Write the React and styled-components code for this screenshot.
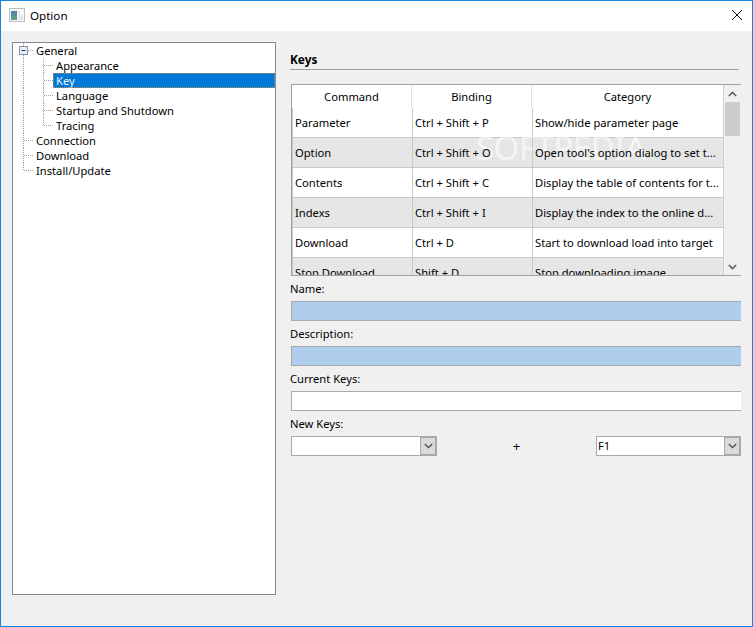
import React from "react";
import styled, { createGlobalStyle } from "styled-components";

const treeItems = [
  { label: "General", level: 0, expander: true },
  { label: "Appearance", level: 1 },
  { label: "Key", level: 1, selected: true },
  { label: "Language", level: 1 },
  { label: "Startup and Shutdown", level: 1 },
  { label: "Tracing", level: 1, last: true },
  { label: "Connection", level: 0 },
  { label: "Download", level: 0 },
  { label: "Install/Update", level: 0, last: true },
];

const bindings = [
  ["Parameter", "Ctrl + Shift + P", "Show/hide parameter page"],
  ["Option", "Ctrl + Shift + O", "Open tool's option dialog to set t..."],
  ["Contents", "Ctrl + Shift + C", "Display the table of contents for t..."],
  ["Indexs", "Ctrl + Shift + I", "Display the index to the online d..."],
  ["Download", "Ctrl + D", "Start to download load into target"],
  ["Stop Download", "Shift + D", "Stop downloading image"],
];

const TreeGuide = ({ level, last, expander }) => (
  <svg width={level ? 40 : 20} height="15" viewBox={`0 0 ${level ? 40 : 20} 15`} style={{ flexShrink: 0 }}>
    <g stroke="#a0a0a0" strokeDasharray="1 1" fill="none">
      {level === 0 && <path d={`M10.5 0V${last ? 8 : 15}`} />}
      {level === 0 && <path d="M11 7.5H20" />}
      {level === 1 && <path d="M10.5 0V15" />}
      {level === 1 && <path d={`M30.5 0V${last ? 8 : 15}`} />}
      {level === 1 && <path d="M31 7.5H40" />}
    </g>
    {expander && (
      <g>
        <rect x="6.5" y="3.5" width="8" height="8" fill="#e8edf5" stroke="#8a94a6" />
        <path d="M8.5 7.5H12.5" stroke="#1f3f7a" />
      </g>
    )}
  </svg>
);

const Chevron = ({ up }) => (
  <svg width="9" height="6" viewBox="0 0 9 6">
    <path d={up ? "M0.8 5L4.5 1.4L8.2 5" : "M0.8 1L4.5 4.6L8.2 1"} fill="none" stroke="#606060" strokeWidth="1.6" />
  </svg>
);

const ComboBox = ({ value }) => (
  <Combo>
    <ComboText>{value}</ComboText>
    <ComboButton>
      <svg width="9" height="6" viewBox="0 0 9 6">
        <path d="M0.8 1L4.5 4.6L8.2 1" fill="none" stroke="#555" strokeWidth="1.4" />
      </svg>
    </ComboButton>
  </Combo>
);

export default function App() {
  return (
    <>
      <GlobalStyle />
      <Window>
        <TitleBar>
          <TitleIcon>
            <svg width="16" height="14" viewBox="0 0 16 14">
              <defs>
                <linearGradient id="paneFill" x1="0" y1="0" x2="0" y2="1">
                  <stop offset="0" stopColor="#4f7f9f" />
                  <stop offset="1" stopColor="#5fa58c" />
                </linearGradient>
              </defs>
              <rect x="0.5" y="0.5" width="15" height="13" fill="#f6f6f6" stroke="#bdbdbd" />
              <rect x="2" y="3" width="6" height="9" fill="url(#paneFill)" />
              <rect x="9" y="3" width="5" height="9" fill="#e4e8e8" />
              <rect x="11" y="3" width="3" height="4" fill="#fafafa" />
            </svg>
          </TitleIcon>
          <TitleText>Option</TitleText>
          <CloseIcon width="10" height="10" viewBox="0 0 10 10">
            <path d="M0 0L10 10M10 0L0 10" stroke="#111" fill="none" />
          </CloseIcon>
        </TitleBar>
        <Body>
          <Tree>
            {treeItems.map((item) => (
              <TreeRow key={item.label}>
                <TreeGuide level={item.level} last={item.last} expander={item.expander} />
                <TreeLabel $selected={item.selected}>{item.label}</TreeLabel>
              </TreeRow>
            ))}
          </Tree>
          <Panel>
            <Heading>Keys</Heading>
            <TableFrame>
              <TableArea>
                <HeaderRow>
                  <HeaderCell>Command</HeaderCell>
                  <HeaderCell>Binding</HeaderCell>
                  <HeaderCell>Category</HeaderCell>
                </HeaderRow>
                {bindings.map((row, i) => (
                  <Row key={row[0]} $alt={i % 2 === 1}>
                    {row.map((text) => (
                      <Cell key={text}>{text}</Cell>
                    ))}
                  </Row>
                ))}
              </TableArea>
              <ScrollBar>
                <ScrollButton><Chevron up /></ScrollButton>
                <ScrollThumb />
                <ScrollTrack />
                <ScrollButton><Chevron /></ScrollButton>
              </ScrollBar>
              <Watermark>SOFTPEDIA</Watermark>
            </TableFrame>
            <FieldLabel>Name:</FieldLabel>
            <Field $filled />
            <FieldLabel>Description:</FieldLabel>
            <Field $filled />
            <FieldLabel>Current Keys:</FieldLabel>
            <Field />
            <FieldLabel>New Keys:</FieldLabel>
            <ComboRow>
              <ComboBox value="" />
              <Plus>+</Plus>
              <ComboBox value="F1" />
            </ComboRow>
          </Panel>
        </Body>
      </Window>
    </>
  );
}

const GlobalStyle = createGlobalStyle`
  html, body {
    margin: 0;
    padding: 0;
  }
  * {
    box-sizing: border-box;
  }
`;

const Window = styled.div`
  width: 753px;
  height: 627px;
  border: 1px solid #1883d7;
  background: #f0f0f0;
  font-family: "Noto Sans", sans-serif;
  font-size: 11.2px;
  color: #000;
  display: flex;
  flex-direction: column;
  overflow: hidden;
`;

const TitleBar = styled.div`
  height: 30px;
  background: #fff;
  display: flex;
  align-items: center;
  padding: 0 0 2px 8px;
  flex-shrink: 0;
`;

const TitleIcon = styled.div`
  width: 16px;
  height: 14px;
  display: flex;
`;

const TitleText = styled.span`
  margin-left: 5px;
  font-size: 11.6px;
`;

const CloseIcon = styled.svg`
  margin-left: auto;
  margin-right: 10px;
`;

const Body = styled.div`
  flex: 1;
  display: flex;
  padding: 11px 11px 31px 11px;
  min-height: 0;
`;

const Tree = styled.div`
  width: 264px;
  height: 553px;
  background: #fff;
  border: 1px solid #828790;
  flex-shrink: 0;
`;

const TreeRow = styled.div`
  height: 15px;
  display: flex;
  align-items: center;
`;

const TreeLabel = styled.div`
  flex: 1;
  height: 15px;
  line-height: 15px;
  padding-left: 3px;
  background: ${(p) => (p.$selected ? "#0078d7" : "transparent")};
  color: ${(p) => (p.$selected ? "#e8f2fb" : "#000")};
  outline: ${(p) => (p.$selected ? "1px dotted #c98a4a" : "none")};
  outline-offset: -1px;
`;

const Panel = styled.div`
  width: 451px;
  margin-left: 14px;
  padding-top: 8px;
  overflow: hidden;
`;

const Heading = styled.div`
  font-weight: 700;
  font-size: 11.8px;
  height: 20px;
  line-height: 19px;
  width: 449px;
  border-bottom: 1px solid #a0a0a0;
`;

const TableFrame = styled.div`
  position: relative;
  margin: 14px 0 0 1px;
  height: 192px;
  width: 450px;
  display: flex;
  border-top: 1px solid #a0a0a0;
  border-bottom: 1px solid #a0a0a0;
  border-left: 1px solid #a0a0a0;
  overflow: hidden;
`;

const TableArea = styled.div`
  width: 432px;
  flex-shrink: 0;
  background: #fff;
  border-right: 1px solid #d0d0d0;
  overflow: hidden;
`;

const HeaderRow = styled.div`
  display: grid;
  grid-template-columns: 120px 120px 191px;
  height: 23px;
`;

const HeaderCell = styled.div`
  text-align: center;
  line-height: 23px;
  border-right: 1px solid #e4e4e4;
  &:last-child {
    border-right: none;
  }
`;

const Row = styled.div`
  display: grid;
  grid-template-columns: 120px 120px 191px;
  height: 30px;
  background: ${(p) => (p.$alt ? "#e6e6e6" : "#fff")};
  border-bottom: 1px solid #c8c8c8;
  border-left: 1px solid #c8c8c8;
`;

const Cell = styled.div`
  position: relative;
  z-index: 1;
  line-height: 29px;
  padding-left: 2px;
  white-space: nowrap;
  overflow: hidden;
  border-right: 1px solid #c8c8c8;
  &:last-child {
    border-right: none;
  }
`;

const ScrollBar = styled.div`
  flex: 1;
  display: flex;
  flex-direction: column;
  background: #f0f0f0;
`;

const ScrollButton = styled.div`
  height: 17px;
  display: flex;
  align-items: center;
  justify-content: center;
`;

const ScrollThumb = styled.div`
  height: 34px;
  margin: 0 1px;
  background: #cdcdcd;
`;

const ScrollTrack = styled.div`
  flex: 1;
`;

const Watermark = styled.div`
  position: absolute;
  left: 184px;
  top: 43px;
  font-size: 33px;
  line-height: 40px;
  letter-spacing: -0.5px;
  color: rgba(255, 255, 255, 0.6);
  pointer-events: none;
`;

const FieldLabel = styled.div`
  height: 25px;
  line-height: 25px;
`;

const Field = styled.div`
  height: 20px;
  margin-left: 1px;
  background: ${(p) => (p.$filled ? "#afcdec" : "#fff")};
  border: 1px solid #a9a9a9;
  border-right: none;
`;

const ComboRow = styled.div`
  display: flex;
  align-items: center;
  justify-content: space-between;
  padding-left: 1px;
`;

const Combo = styled.div`
  width: 146px;
  height: 20px;
  display: flex;
  background: #fff;
  border: 1px solid #a9a9a9;
  &:last-child {
    width: 145px;
  }
`;

const ComboText = styled.div`
  flex: 1;
  line-height: 18px;
  padding-left: 1px;
`;

const ComboButton = styled.div`
  width: 16px;
  background: #dadada;
  border: 1px solid #a9a9a9;
  display: flex;
  align-items: center;
  justify-content: center;
`;

const Plus = styled.span`
  width: 14px;
  text-align: center;
  font-size: 13px;
`;
